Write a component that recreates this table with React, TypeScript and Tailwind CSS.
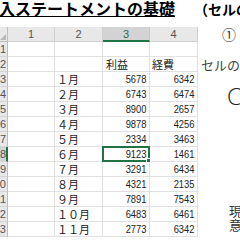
const cjk = "font-['Noto_Sans_CJK_JP',sans-serif]";
const num = "font-['Liberation_Sans',sans-serif]";

const months = ["１月", "２月", "３月", "４月", "５月", "６月", "７月", "８月", "９月", "１０月", "１１月"];
const values = [
  [5678, 6342],
  [6743, 6474],
  [8900, 2657],
  [9878, 4256],
  [2334, 3463],
  [9123, 1461],
  [3291, 6434],
  [4321, 2135],
  [7891, 7543],
  [6483, 6461],
  [2773, 6342],
];

const widths = ["w-[47px]", "w-[48px]", "w-[47px]", "w-[48px]"];

function Num({ v }: { v: number }) {
  return (
    <div className="flex justify-end pr-[3px]">
      <span className={`inline-block origin-right scale-x-[0.85] text-[11px] leading-[14px] text-[#222] ${num}`}>{v}</span>
    </div>
  );
}

function Row({ n }: { n: number }) {
  const sel = n === 8;
  const m = n >= 3 ? months[n - 3] : null;
  const v = n >= 3 ? values[n - 3] : null;
  return (
    <div className="flex h-[15px] text-[11px] leading-[14px]">
      <div
        className={`w-[8px] shrink-0 overflow-hidden border-b border-[#d4d4d4] ${
          sel ? "bg-[#d3d3d3] border-r-2 border-r-[#217346]" : "bg-[#e8e8e8] border-r border-r-[#bdbdbd]"
        }`}
      >
        <div className={`w-[30px] ml-[-23px] pr-[1px] text-right text-[#555] ${num}`}>{n}</div>
      </div>
      <div className={`${widths[0]} shrink-0 border-r border-b border-[#e1e1e1]`} />
      <div className={`${widths[1]} shrink-0 overflow-hidden whitespace-nowrap border-r border-b border-[#e1e1e1] pl-[2px] text-[#222] ${cjk}`}>
        {m}
      </div>
      <div className={`${widths[2]} relative shrink-0 border-r border-b border-[#e1e1e1]`}>
        {n === 2 && <div className={`pl-[3px] text-[#222] ${cjk}`}>利益</div>}
        {v && <Num v={v[0]} />}
        {sel && (
          <div className="absolute left-[-1px] top-[-1px] right-[-1px] bottom-[-1px] border-2 border-[#217346]">
            <div className="absolute right-[-3px] bottom-[-3px] h-[5px] w-[5px] bg-[#217346] border border-white" />
          </div>
        )}
      </div>
      <div className={`${widths[3]} shrink-0 border-r border-b border-[#e1e1e1]`}>
        {n === 2 && <div className={`pl-[2px] text-[#222] ${cjk}`}>経費</div>}
        {v && <Num v={v[1]} />}
      </div>
    </div>
  );
}

export default function App() {
  return (
    <div className="w-[240px] h-[240px] overflow-hidden bg-white">
      <div className={`flex items-end h-[27px] pb-[10px] whitespace-nowrap font-bold text-black ${cjk}`}>
        <span className="ml-[-1px] text-[16px] leading-[16px] border-b-[1.5px] border-black">入ステートメントの基礎</span>
        <span className="ml-[19px] text-[14px] leading-[16px]">（セルの</span>
      </div>
      <div className="flex">
        <div className="w-[198px] shrink-0">
          <div className="flex h-[15px]">
            <div className="relative w-[8px] shrink-0 bg-[#e8e8e8] border-r border-b border-[#bdbdbd]">
              <div className="absolute right-[1px] bottom-[1px] h-0 w-0 border-b-[6px] border-l-[6px] border-l-transparent border-b-[#b8b8b8]" />
            </div>
            {[1, 2, 3, 4].map((c, i) => (
              <div
                key={c}
                className={`${widths[i]} shrink-0 flex items-center justify-center text-[11px] leading-[14px] ${num} ${
                  c === 3
                    ? "bg-[#d3d3d3] border-b-2 border-b-[#217346] border-r border-r-[#c6c6c6] text-[#2f6b47]"
                    : "bg-[#e8e8e8] border-b border-r border-[#d0d0d0] text-[#555]"
                }`}
              >
                {c}
              </div>
            ))}
          </div>
          {Array.from({ length: 13 }, (_, i) => (
            <Row key={i} n={i + 1} />
          ))}
        </div>
        <div className={`flex-1 flex flex-col text-[#333] whitespace-nowrap ${cjk}`}>
          <div className="pl-[24px] text-[14px] leading-[14px]">①</div>
          <div className="pl-[3px] mt-[17px] text-[13px] leading-[13px] text-[#444]">セルの</div>
          <div className="pl-[29px] mt-[14px] text-[23px] leading-[23px] font-light text-[#222] font-['Open_Sans',sans-serif]">C</div>
          <div className="pl-[31px] mt-[96px] text-[13px] leading-[13px]">現</div>
          <div className="pl-[31px] mt-[1px] text-[13px] leading-[13px]">意</div>
        </div>
      </div>
    </div>
  );
}
